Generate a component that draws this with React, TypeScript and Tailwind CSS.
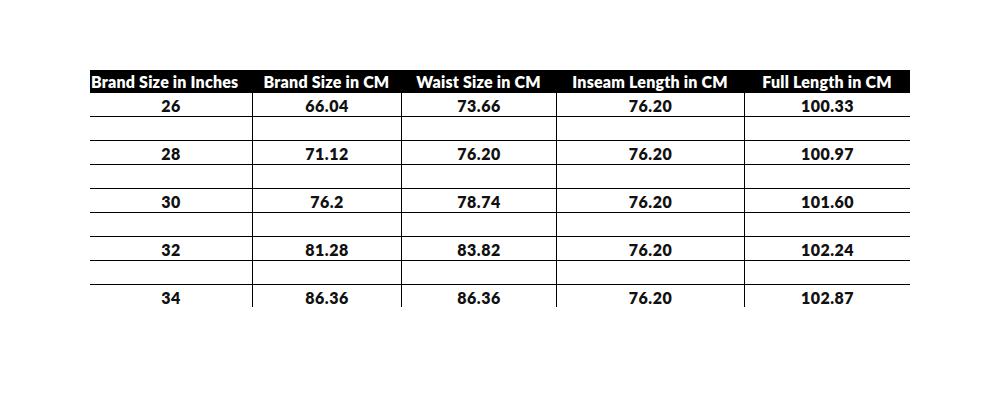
import React from "react";

const headers = [
  "Brand Size in Inches",
  "Brand Size in CM",
  "Waist Size in CM",
  "Inseam Length in CM",
  "Full Length in CM",
];

const data: (string[] | null)[] = [
  ["26", "66.04", "73.66", "76.20", "100.33"],
  null,
  ["28", "71.12", "76.20", "76.20", "100.97"],
  null,
  ["30", "76.2", "78.74", "76.20", "101.60"],
  null,
  ["32", "81.28", "83.82", "76.20", "102.24"],
  null,
  ["34", "86.36", "86.36", "76.20", "102.87"],
];

const cols = "grid grid-cols-[162px_149px_155px_188px_166px]";

export default function App() {
  return (
    <div
      className="w-[1000px] h-[400px] bg-white pt-[70px] pl-[90px]"
      style={{ fontFamily: "Lato, 'Open Sans', sans-serif" }}
    >
      <div className="w-[820px]">
        <div className={`${cols} h-[23px] bg-black text-white font-extrabold text-[16px] tracking-[0.2px] leading-none`}>
          {headers.map((h, i) => (
            <div
              key={h}
              className={`flex items-center whitespace-nowrap pt-[1px] ${i === 0 ? "justify-start pl-[1px]" : "justify-center"}`}
            >
              {h}
            </div>
          ))}
        </div>
        {data.map((row, i) => {
          const last = i === data.length - 1;
          return (
            <div
              key={i}
              className={`${cols} ${last ? "h-[22px]" : "h-[24px] border-b border-black"} text-[16px] tracking-[0.5px] font-extrabold text-[#111] leading-none`}
            >
              {[0, 1, 2, 3, 4].map((c) => (
                <div
                  key={c}
                  className={`flex items-center justify-center pt-[3px] ${c > 0 ? "border-l border-black" : ""}`}
                >
                  {row ? row[c] : ""}
                </div>
              ))}
            </div>
          );
        })}
      </div>
    </div>
  );
}
